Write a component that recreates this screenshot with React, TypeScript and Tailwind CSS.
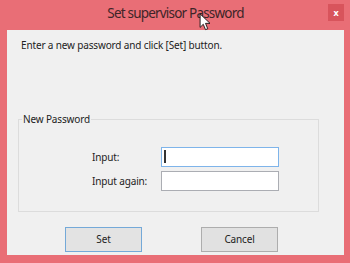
import { useState } from 'react';

const font = { fontFamily: '"Noto Sans", "Open Sans", Arial, sans-serif' };

function Cursor() {
  return (
    <svg width="13" height="18" viewBox="0 0 14 20" className="absolute left-[199px] top-[13px]">
      <path
        d="M1 1 L1 16 L4.5 12.5 L7 18.5 L9.5 17.5 L7 11.5 L12 11.5 Z"
        fill="#ffffff"
        stroke="#111111"
        strokeWidth="1"
        strokeLinejoin="round"
      />
    </svg>
  );
}

export default function App() {
  const [pw, setPw] = useState('');
  const [pw2, setPw2] = useState('');

  return (
    <div
      className="relative w-[350px] h-[263px] bg-[#e96e76] flex flex-col pl-[7px] pr-[6px] text-[#222]"
      style={font}
    >
      {/* title bar */}
      <div className="h-[30px] grid grid-cols-[1fr_auto_1fr] items-start">
        <div />
        <div className="pt-[3px] text-[13.5px] tracking-[-0.8px] leading-[20px] text-[#3d2528]">
          Set supervisor Password
        </div>
        <div className="flex justify-end pt-[4px]">
          <button className="w-[16px] h-[17px] bg-[#d8545c] flex items-center justify-center text-[9px] leading-none font-bold text-white">
            x
          </button>
        </div>
      </div>

      {/* client area */}
      <div className="h-[225px] bg-[#f0f0f0] flex flex-col pt-[7px] text-[10px] tracking-[-0.15px]">
        <p className="pl-[14px] leading-[16px]">Enter a new password and click [Set] button.</p>

        <fieldset className="mt-[59px] ml-[11px] w-[301px] border border-[#dcdcdc] pl-[3px] pb-[20px]">
          <legend className="px-[1px] leading-[14px]">New Password</legend>
          <div className="grid grid-cols-[69px_118px] gap-y-[4px] items-center pl-[70px] pt-[21px]">
            <label className="leading-[14px]">Input:</label>
            <div className="relative">
              <input
                autoFocus
                type="password"
                value={pw}
                onChange={(e) => setPw(e.target.value)}
                className="block w-full h-[20px] border border-[#7eb4ea] bg-white px-[2px] outline-none caret-black"
              />
              {pw === '' && <span className="absolute left-[3px] top-[3px] w-[2px] h-[13px] bg-[#333]" />}
            </div>
            <label className="leading-[14px]">Input again:</label>
            <input
              type="password"
              value={pw2}
              onChange={(e) => setPw2(e.target.value)}
              className="block w-full h-[20px] border border-[#abadb3] bg-white px-[2px] outline-none"
            />
          </div>
        </fieldset>

        <div className="mt-[15px] flex gap-[59px] pl-[58px]">
          <button className="w-[77px] h-[25px] border border-[#74a9d8] bg-[#e3e3e3]">Set</button>
          <button className="w-[77px] h-[25px] border border-[#adadad] bg-[#e1e1e1]">Cancel</button>
        </div>
      </div>

      <Cursor />
    </div>
  );
}
